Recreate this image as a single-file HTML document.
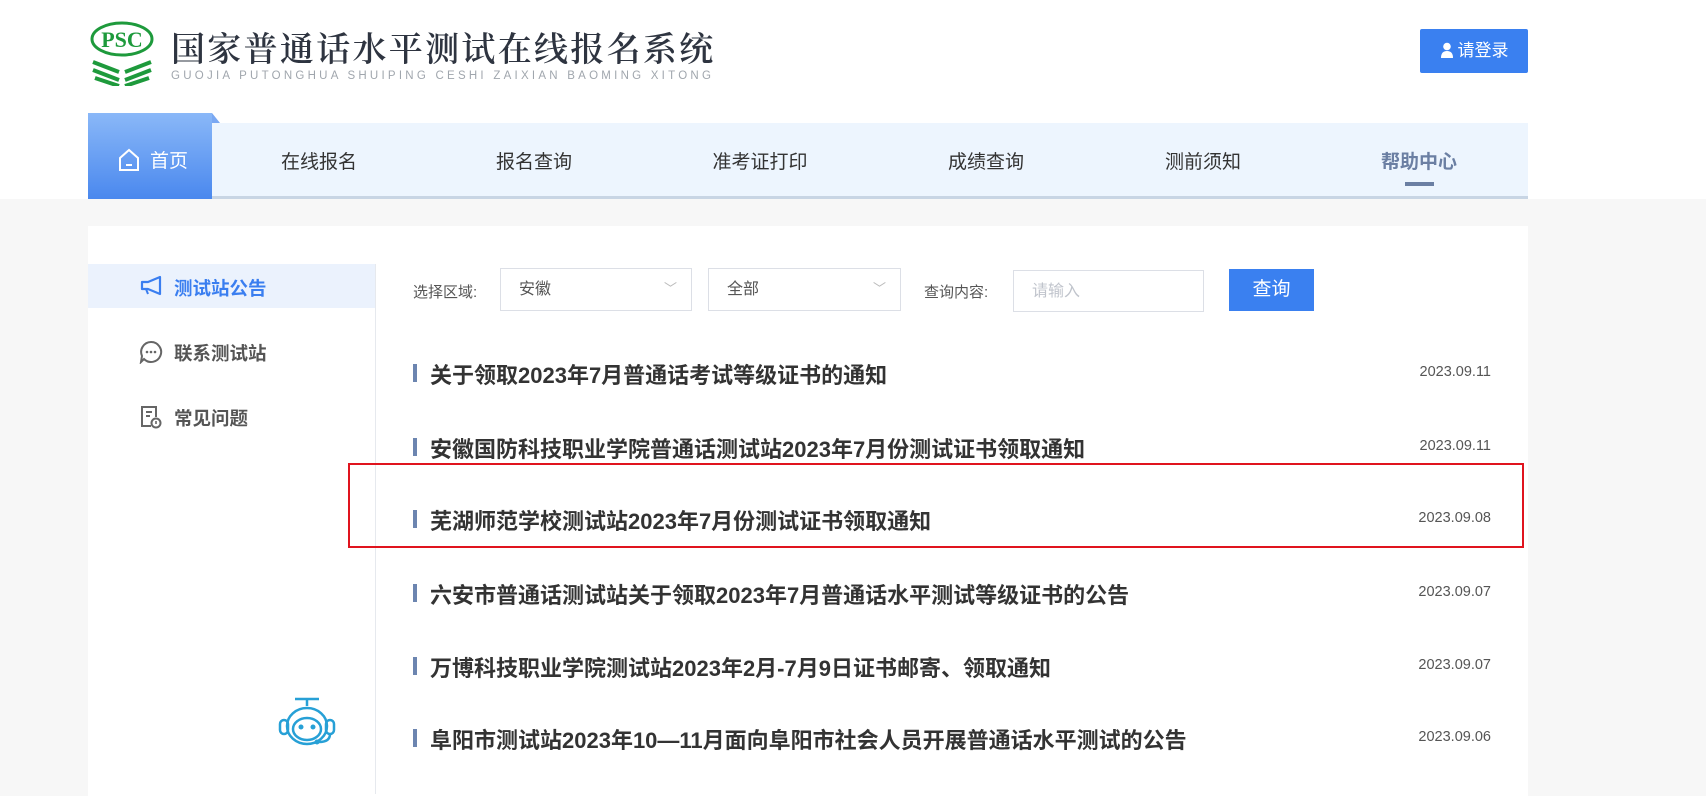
<!DOCTYPE html>
<html><head><meta charset="utf-8"><style>
*{margin:0;padding:0;box-sizing:border-box}
body{width:1706px;height:788px;overflow:hidden;background:#f7f7f7;font-family:"Liberation Sans","Noto Sans CJK SC",sans-serif;position:relative}
.top{position:absolute;left:0;top:0;width:1706px;height:199px;background:#fff}
.abs{position:absolute}
.title{left:171px;top:22px;font-size:34px;color:#2e3440;letter-spacing:2.3px;white-space:nowrap;font-family:"Noto Serif CJK SC","Noto Sans CJK SC",serif;font-weight:600}
.pinyin{left:171px;top:70px;font-size:11.5px;color:#a0a6ad;letter-spacing:3.25px;white-space:nowrap}
.login{left:1420px;top:29px;width:108px;height:44px;background:#3a80f0;border-radius:2px;color:#fff;font-size:17px;line-height:44px;text-align:center}
.nav{left:88px;top:123px;width:1440px;height:76px;background:#edf5fe;border-bottom:3px solid #c8d5e4}
.home{left:88px;top:113px;width:124px;height:86px;background:linear-gradient(#8ab8f8,#4a88ee);color:#fff;font-size:19px}
.ni{position:absolute;top:147px;font-size:19px;color:#333;transform:translateX(-50%);white-space:nowrap}
.card{left:88px;top:226px;width:1440px;height:570px;background:#fff}
.side{left:375px;top:264px;width:1px;height:530px;background:#e6e9ee}
.sact{left:88px;top:264px;width:287px;height:44px;background:#ebf2fd}
.si{position:absolute;left:174px;font-size:18.5px;font-weight:bold;color:#555}
.lbl{position:absolute;top:281px;font-size:15px;color:#555}
.sel{position:absolute;top:268px;height:43px;border:1px solid #dcdfe6;font-size:16px;color:#555;padding-left:18px;line-height:41px}
.row{position:absolute;left:413px;width:1078px}
.row b{position:absolute;left:0;top:5px;width:4px;height:18px;background:#6c85b0}
.row span{position:absolute;left:17px;top:-1px;font-size:22px;font-weight:bold;color:#333;white-space:nowrap}
.row i{position:absolute;right:0;top:5px;font-style:normal;font-size:14.5px;color:#555}
</style></head><body>
<div class="top"></div>
<svg class="abs" style="left:89px;top:20px" width="66" height="66" viewBox="0 0 66 66">
<ellipse cx="33" cy="19" rx="30" ry="16" fill="none" stroke="#1e9a3c" stroke-width="3"/>
<text x="33" y="27" text-anchor="middle" font-family="Liberation Serif" font-weight="bold" font-size="22" fill="#1e9a3c">PSC</text>
<g stroke="#1e9a3c" stroke-width="4" fill="none"><path d="M4 42 L30 52 M4 50 L30 60 M6 58 L30 66"/><path d="M62 42 L36 52 M62 50 L36 60 M60 58 L36 66"/></g>
</svg>
<div class="abs title">国家普通话水平测试在线报名系统</div>
<div class="abs pinyin">GUOJIA PUTONGHUA SHUIPING CESHI ZAIXIAN BAOMING XITONG</div>
<div class="abs login"><svg width="14" height="16" viewBox="0 0 14 16" style="vertical-align:-2px;margin-right:4px"><circle cx="7" cy="4.5" r="3.8" fill="#fff"/><path d="M1 16 Q1 9 7 9 Q13 9 13 16Z" fill="#fff"/></svg>请登录</div>
<div class="abs nav"></div>
<div class="abs home"><svg class="abs" style="left:30px;top:35px" width="22" height="24" viewBox="0 0 22 24"><path d="M2 10 L11 2 L20 10 V22 H2Z" fill="none" stroke="#fff" stroke-width="2"/><path d="M8 17 H14" stroke="#fff" stroke-width="2"/></svg><span class="abs" style="left:62px;top:33px">首页</span></div>
<div class="abs" style="left:212px;top:113px;width:0;height:0;border-left:8px solid #7aa8f2;border-top:10px solid transparent"></div>
<div class="ni" style="left:319px">在线报名</div>
<div class="ni" style="left:534px">报名查询</div>
<div class="ni" style="left:760px">准考证打印</div>
<div class="ni" style="left:986px">成绩查询</div>
<div class="ni" style="left:1203px">测前须知</div>
<div class="ni" style="left:1419px;color:#6b7fa3;font-weight:bold">帮助中心</div>
<div class="abs" style="left:1405px;top:182px;width:29px;height:4px;background:#6b7fa3"></div>
<div class="abs card"></div>
<div class="abs sact"></div>
<div class="abs side"></div>
<svg class="abs" style="left:140px;top:275px" width="22" height="22" viewBox="0 0 22 22"><path d="M20 2 L8 7 H2 V14 H8 L20 19Z" fill="none" stroke="#3a7ef0" stroke-width="2.2" stroke-linejoin="round"/><path d="M6 14 L8 19" stroke="#3a7ef0" stroke-width="2"/></svg>
<div class="si" style="top:275px;color:#3a7ef0">测试站公告</div>
<svg class="abs" style="left:139px;top:340px" width="24" height="24" viewBox="0 0 24 24"><path d="M12 2 A10 10 0 1 1 5 19 L2 22 L3 16 A10 10 0 0 1 12 2Z" fill="none" stroke="#666" stroke-width="2"/><circle cx="8" cy="12" r="1.3" fill="#666"/><circle cx="12" cy="12" r="1.3" fill="#666"/><circle cx="16" cy="12" r="1.3" fill="#666"/></svg>
<div class="si" style="top:340px">联系测试站</div>
<svg class="abs" style="left:140px;top:405px" width="22" height="24" viewBox="0 0 22 24"><path d="M11 21 H2 V2 H16 V12" fill="none" stroke="#666" stroke-width="2"/><path d="M6 7 H12 M6 11 H10" stroke="#666" stroke-width="2"/><circle cx="16" cy="18" r="4.5" fill="none" stroke="#666" stroke-width="2"/><path d="M16 16 V19" stroke="#666" stroke-width="1.6"/></svg>
<div class="si" style="top:405px">常见问题</div>
<svg class="abs" style="left:275px;top:696px" width="64" height="60" viewBox="0 0 64 60"><g fill="none" stroke="#27a0d6" stroke-width="2.5"><path d="M20 3 H44 M32 3 V10"/><ellipse cx="32" cy="30" rx="20" ry="18"/><ellipse cx="32" cy="33" rx="14" ry="11"/><rect x="5" y="24" width="8" height="14" rx="4"/><rect x="51" y="24" width="8" height="14" rx="4"/><path d="M55 38 Q55 46 44 46"/></g><circle cx="26" cy="31" r="2.5" fill="#27a0d6"/><circle cx="38" cy="31" r="2.5" fill="#27a0d6"/><circle cx="42" cy="46" r="2.5" fill="#27a0d6"/></svg>
<div class="lbl" style="left:413px">选择区域:</div>
<div class="sel" style="left:500px;width:192px">安徽<span style="position:absolute;right:14px;top:-1px;color:#bbb;font-size:13px">﹀</span></div>
<div class="sel" style="left:708px;width:193px">全部<span style="position:absolute;right:14px;top:-1px;color:#bbb;font-size:13px">﹀</span></div>
<div class="lbl" style="left:924px">查询内容:</div>
<div class="sel" style="left:1013px;width:191px;top:270px;height:42px;color:#c0c4cc">请输入</div>
<div class="abs" style="left:1229px;top:269px;width:85px;height:42px;background:#3a80f0;color:#fff;font-size:19px;line-height:42px;text-align:center">查询</div>
<div class="row" style="top:359px"><b></b><span>关于领取2023年7月普通话考试等级证书的通知</span><i>2023.09.11</i></div>
<div class="row" style="top:433px"><b></b><span>安徽国防科技职业学院普通话测试站2023年7月份测试证书领取通知</span><i>2023.09.11</i></div>
<div class="row" style="top:505px"><b></b><span>芜湖师范学校测试站2023年7月份测试证书领取通知</span><i>2023.09.08</i></div>
<div class="row" style="top:579px"><b></b><span>六安市普通话测试站关于领取2023年7月普通话水平测试等级证书的公告</span><i>2023.09.07</i></div>
<div class="row" style="top:652px"><b></b><span>万博科技职业学院测试站2023年2月-7月9日证书邮寄、领取通知</span><i>2023.09.07</i></div>
<div class="row" style="top:724px"><b></b><span>阜阳市测试站2023年10—11月面向阜阳市社会人员开展普通话水平测试的公告</span><i>2023.09.06</i></div>
<div class="abs" style="left:348px;top:463px;width:1176px;height:85px;border:2px solid #e0141e"></div>
</body></html>
